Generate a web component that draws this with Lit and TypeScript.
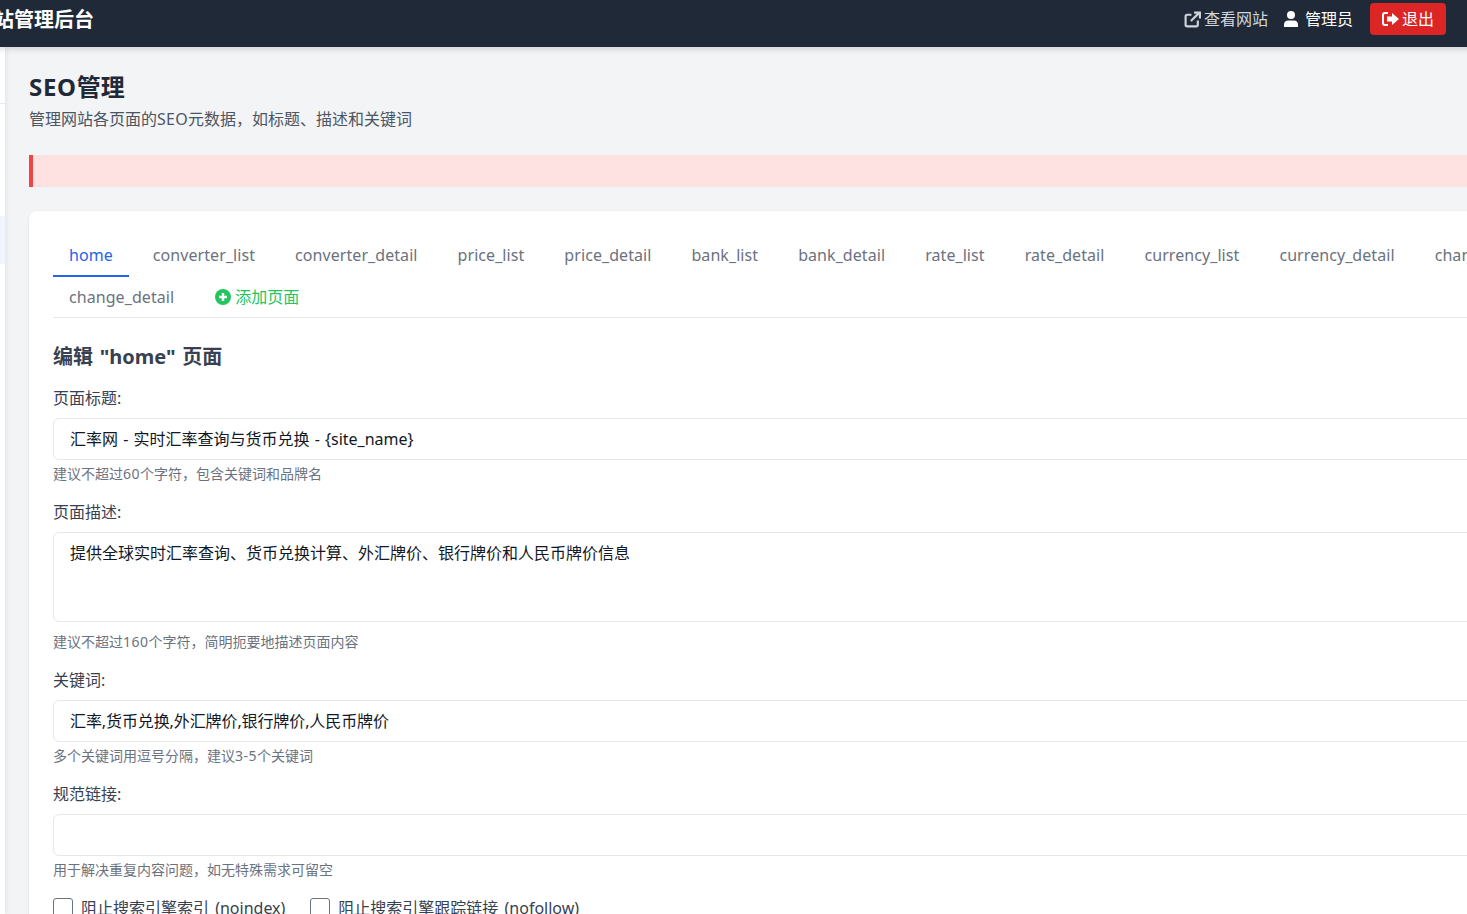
import { LitElement, html, css } from "lit";
import { customElement } from "lit/decorators.js";

const TABS = ["home","converter_list","converter_detail","price_list","price_detail","bank_list","bank_detail","rate_list","rate_detail","currency_list","currency_detail","change_list","change_detail"];

@customElement("app-root")
export class AppRoot extends LitElement {
  static styles = css`
    :host { display: block; height: 914px; overflow: hidden; font-family: "Noto Sans", "Noto Sans CJK SC", sans-serif; background: #f3f4f6; color: #1f2937; }
    * { box-sizing: border-box; }
    .stage { margin-left: -251px; width: 1859px; }
    header { height: 47px; background: #1f2937; color: #fff; display: flex; align-items: center; justify-content: space-between; padding: 0 162px 0 0; position: relative; z-index: 2; box-shadow: 0 2px 6px rgba(0,0,0,.15); }
    .brand { font-size: 20px; font-weight: 700; line-height: 40px; margin-top: -8px; padding-left: 185px; white-space: nowrap; }
    .nav { display: flex; align-items: center; margin-top: -9px; font-size: 16px; line-height: 22px; }
    .nav a { display: flex; align-items: center; gap: 3px; }
    .view { color: #d1d5db; margin-right: 16px; }
    .user { margin-right: 17px; gap: 7px !important; }
    .out { background: #dc2626; border-radius: 4px; height: 32px; width: 76px; justify-content: center; }
    .body { display: flex; }
    aside { width: 256px; flex: none; background: #fff; height: 867px; box-shadow: 2px 0 4px rgba(0,0,0,.06); }
    .sb-head { height: 57px; border-bottom: 1px solid #e5e7eb; }
    .sb-active { height: 48px; margin-top: 112px; background: #eff6ff; }
    main { flex: none; width: 1603px; padding: 24px; }
    h1 { margin: 0; font-size: 24px; font-weight: 700; line-height: 32px; }
    h1 .lat { letter-spacing: .7px; }
    .sub { margin: 0; font-size: 16px; line-height: 24px; color: #4b5563; margin-top: 4px; }
    .sub .lat { letter-spacing: .3px; }
    .alert { height: 32px; margin-top: 24px; background: #fee2e2; border-left: 4px solid #ef4444; }
    .card { margin-top: 24px; background: #fff; border-radius: 8px; box-shadow: 0 1px 3px rgba(0,0,0,.1); padding: 24px; }
    .tabs { display: flex; flex-wrap: wrap; border-bottom: 1px solid #e5e7eb; }
    .tab { padding: 0 16px; margin-right: 8px; height: 42px; font-size: 16px; line-height: 40px; color: #6b7280; white-space: nowrap; border-bottom: 2px solid transparent; letter-spacing: .07px; }
    .tab.on { color: #2563eb; border-bottom-color: #2563eb; }
    .tab.last { margin-bottom: -2px; }
    .add { color: #22c55e; display: flex; align-items: center; gap: 4px; margin-left: 1px; letter-spacing: 0; }
    h2 { margin: 25px 0 0; font-size: 20px; line-height: 28px; font-weight: 700; color: #374151; word-spacing: 1.5px; }
    label.f { display: block; margin-top: 16px; font-size: 16px; line-height: 24px; color: #374151; }
    h2 + label.f { margin-top: 15px; }
    .in { margin-top: 8px; border: 1px solid #e5e7eb; border-radius: 6px; height: 42px; padding: 0 16px; font-size: 16px; line-height: 40px; color: #111827; word-spacing: 1px; }
    .ta { height: 90px; line-height: 40px; }
    .kw { letter-spacing: -.1px; }
    .hint { margin: 4px 0 0; font-size: 14px; line-height: 20px; color: #6b7280; }
    .hint .d { letter-spacing: .5px; }
    .ta + .hint { margin-top: 10px; }
    .checks { display: flex; gap: 25px; margin-top: 16px; font-size: 16px; line-height: 24px; color: #374151; word-spacing: 2px; }
    .ck { display: flex; align-items: center; gap: 8px; }
    .box { width: 20px; height: 20px; border: 1px solid #6b7280; border-radius: 3px; background: #fff; }
  `;

  render() {
    return html`<div class="stage">
      <header>
        <div class="brand">汇率网站管理后台</div>
        <div class="nav">
          <a class="view"><svg width="17" height="17" viewBox="0 0 16 16" fill="none" stroke="currentColor" stroke-width="2"><path d="M13 9v4a1.500 1.500 0 0 1-1.500 1.500H3A1.500 1.500 0 0 1 1.500 13V5A1.500 1.500 0 0 1 3 3.500h4"/><path d="M6.500 9.500 14 2"/><path d="M9.500 1.500h5.500V7" /></svg>查看网站</a>
          <a class="user"><svg width="14" height="16" viewBox="0 0 14 16" fill="#fff"><circle cx="7" cy="4" r="4"/><path d="M0 16v-2.500C0 11 2 9.500 4 9.500h6c2 0 4 1.500 4 4V16z"/></svg>管理员</a>
          <a class="out"><svg width="17" height="14" viewBox="0 0 17 14" fill="#fff"><path d="M6 0H3a3 3 0 0 0-3 3v8a3 3 0 0 0 3 3h3v-2H3a1 1 0 0 1-1-1V3a1 1 0 0 1 1-1h3z"/><path d="M10 1l7 6-7 6V9.500H5v-5h5z"/></svg>退出</a>
        </div>
      </header>
      <div class="body">
        <aside><div class="sb-head"></div><div class="sb-active"></div></aside>
        <main>
          <h1><span class="lat">SEO</span>管理</h1>
          <p class="sub">管理网站各页面的<span class="lat">SEO</span>元数据，如标题、描述和关键词</p>
          <div class="alert"></div>
          <div class="card">
            <div class="tabs">
              ${TABS.map((t, i) => html`<div class="tab ${i === 0 ? "on" : ""} ${i === TABS.length - 1 ? "last" : ""}">${t}</div>`)}
              <div class="tab add last"><svg width="16" height="16" viewBox="0 0 16 16"><circle cx="8" cy="8" r="8" fill="#22c55e"/><path d="M8 4v8M4 8h8" stroke="#fff" stroke-width="2.400"/></svg>添加页面</div>
            </div>
            <h2>编辑 "home" 页面</h2>
            <label class="f">页面标题:</label>
            <div class="in">汇率网 - 实时汇率查询与货币兑换 - {site_name}</div>
            <p class="hint">建议不超过<span class="d">60</span>个字符，包含关键词和品牌名</p>
            <label class="f">页面描述:</label>
            <div class="in ta">提供全球实时汇率查询、货币兑换计算、外汇牌价、银行牌价和人民币牌价信息</div>
            <p class="hint">建议不超过<span class="d">160</span>个字符，简明扼要地描述页面内容</p>
            <label class="f">关键词:</label>
            <div class="in kw">汇率,货币兑换,外汇牌价,银行牌价,人民币牌价</div>
            <p class="hint">多个关键词用逗号分隔，建议<span class="d">3-5</span>个关键词</p>
            <label class="f">规范链接:</label>
            <div class="in"></div>
            <p class="hint">用于解决重复内容问题，如无特殊需求可留空</p>
            <div class="checks">
              <div class="ck"><span class="box"></span>阻止搜索引擎索引 (noindex)</div>
              <div class="ck"><span class="box"></span>阻止搜索引擎跟踪链接 (nofollow)</div>
            </div>
          </div>
        </main>
      </div>
    </div>`;
  }
}
